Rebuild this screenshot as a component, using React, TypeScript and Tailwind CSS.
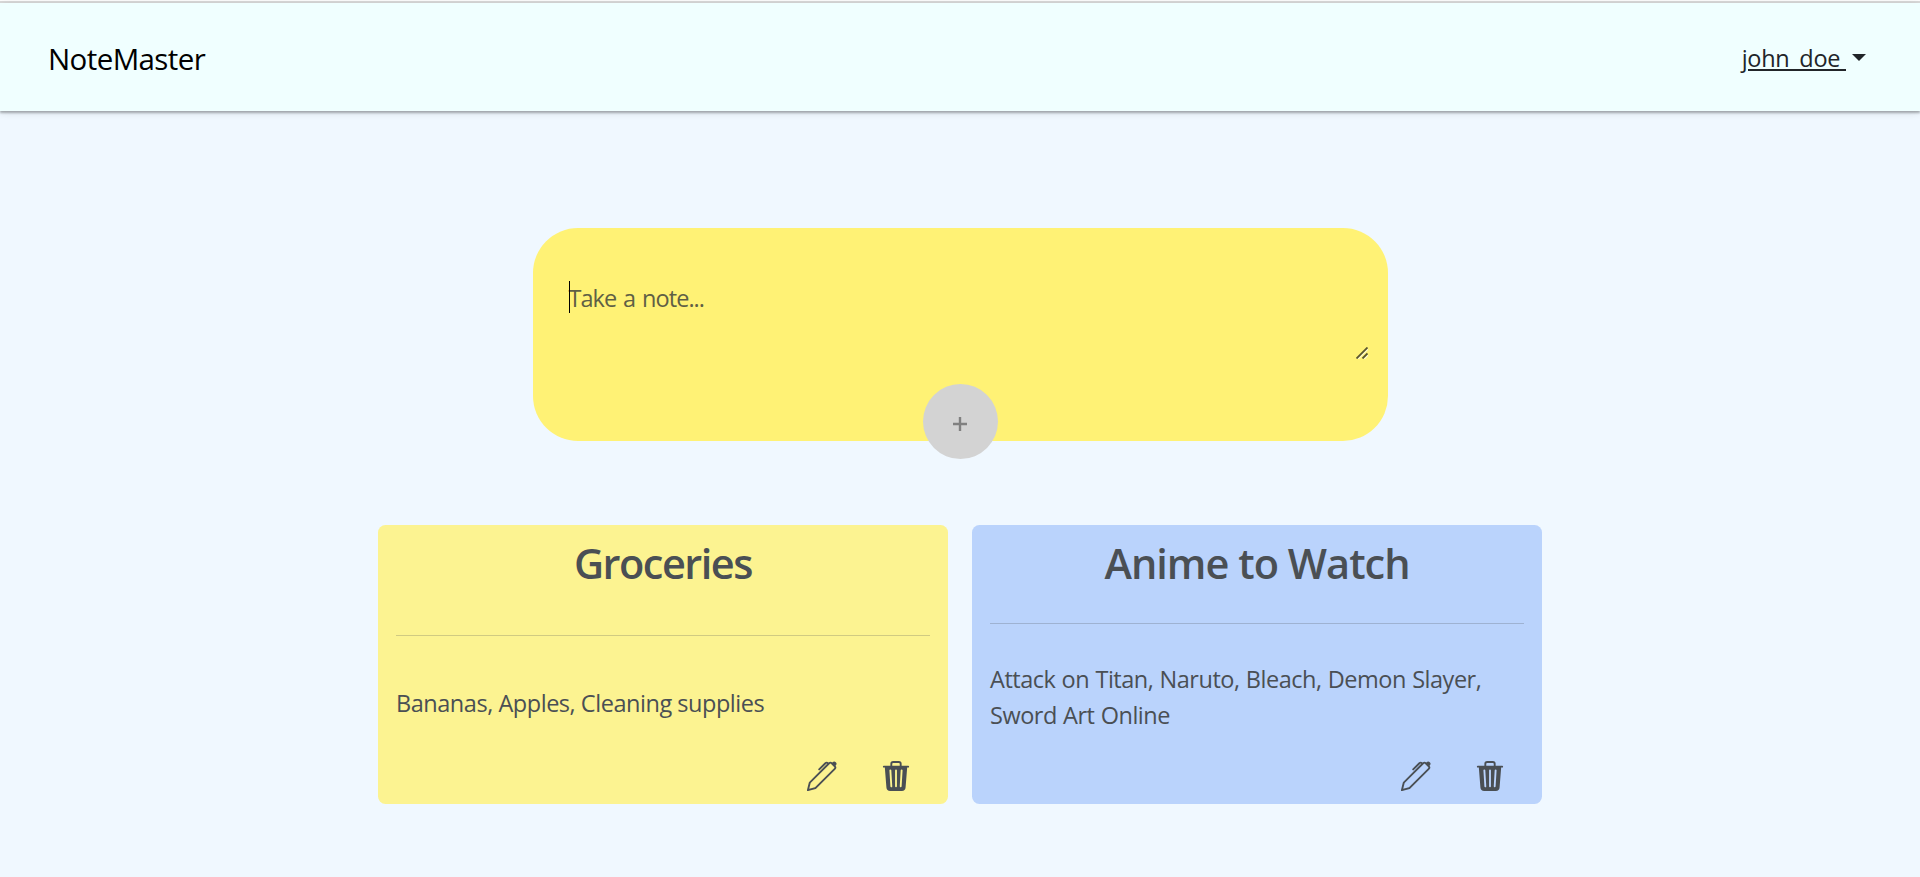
import { BsPen, BsTrash3Fill } from "react-icons/bs";

type Note = {
  title: string;
  text: string[];
  card: string;
  rule: string;
  heading: string;
  body: string;
};

const notes: Note[] = [
  {
    title: "Groceries",
    text: ["Bananas, Apples, Cleaning supplies"],
    card: "bg-[#fcf391]",
    rule: "bg-[#d0ca82]",
    heading: "tracking-[-1.5px]",
    body: "tracking-[-0.46px]",
  },
  {
    title: "Anime to Watch",
    text: ["Attack on Titan, Naruto, Bleach, Demon Slayer,", "Sword Art Online"],
    card: "bg-[#bad3fc]",
    rule: "bg-[#9eb2d2]",
    heading: "tracking-[-0.98px]",
    body: "tracking-[-0.48px] [word-spacing:0.6px]",
  },
];

function Header() {
  return (
    <header className="flex h-[108px] items-center justify-between bg-[#f0ffff] pr-[54px] pl-12 shadow-[0_2px_2px_rgba(0,0,0,0.27),0_1px_8px_rgba(0,0,0,0.14)]">
      <h1 className="pt-0.5 text-[29.5px] leading-[45px] tracking-[-0.6px] text-black">NoteMaster</h1>
      <button className="flex items-center pt-0.5 text-[23.5px] leading-9 tracking-[-0.3px] text-[#212529]">
        <span className="underline decoration-2 underline-offset-2">john_doe&nbsp;</span>
        <svg className="mb-0.5 ml-1.5 h-[7px] w-3.5" viewBox="0 0 14 7" fill="currentColor">
          <path d="M0 0h14L7 7z" />
        </svg>
      </button>
    </header>
  );
}

function NoteForm() {
  return (
    <section className="relative mx-auto mt-[117px] h-[213px] w-[855px] rounded-[45px] bg-[#fff275] pt-[52px] pl-9">
      <div className="relative h-[79px] w-[801px]">
        <p className="text-[23.5px] leading-9 tracking-[-0.95px] text-[#5f6045] [word-spacing:1.7px]">Take a note...</p>
        <span className="absolute top-px left-0 h-8 w-px bg-black" />
        <svg className="absolute right-0.5 bottom-0 h-3 w-3" viewBox="0 0 12 12" fill="none">
          <path d="M2 12L12 2M8 12L12 8" stroke="#fffbd0" strokeWidth="1.5" />
          <path d="M0.5 11.5L11.5 0.5M6.5 11.5L11.5 6.5" stroke="#5a5530" strokeWidth="1.8" />
        </svg>
      </div>
      <button className="absolute top-[156px] left-[390px] flex h-[75px] w-[75px] items-center justify-center rounded-full bg-[#d3d3d3] pt-[5px]">
        <svg className="h-3.5 w-3.5" viewBox="0 0 14 14" fill="none" stroke="#808080" strokeWidth="2.4">
          <path d="M7 0v14M0 7h14" />
        </svg>
      </button>
    </section>
  );
}

function NoteCard({ note }: { note: Note }) {
  return (
    <article className={`flex h-[279px] w-[570px] flex-col justify-between rounded-[7.5px] px-[18px] py-[13px] text-[#4a4f54] ${note.card}`}>
      <h2 className={`mb-[35px] text-center text-[41.5px] leading-[50px] font-semibold ${note.heading}`}>{note.title}</h2>
      <div className={`h-px shrink-0 ${note.rule}`} />
      <p className={`mt-[37px] mb-7 text-[23.5px] leading-9 whitespace-nowrap ${note.body}`}>
        {note.text.map((line) => (
          <span key={line} className="block">{line}</span>
        ))}
      </p>
      <div className="flex justify-end gap-11 pr-[19px]">
        <BsPen size={30} />
        <BsTrash3Fill size={30} />
      </div>
    </article>
  );
}

export default function App() {
  return (
    <div className="h-[877px] overflow-hidden bg-[#f0f8ff] font-['Open_Sans',sans-serif]">
      <div className="h-[3px] border-b-2 border-[#dcdcdc] bg-white" />
      <Header />
      <NoteForm />
      <main className="mt-[84px] flex justify-center gap-6">
        {notes.map((note) => (
          <NoteCard key={note.title} note={note} />
        ))}
      </main>
    </div>
  );
}
